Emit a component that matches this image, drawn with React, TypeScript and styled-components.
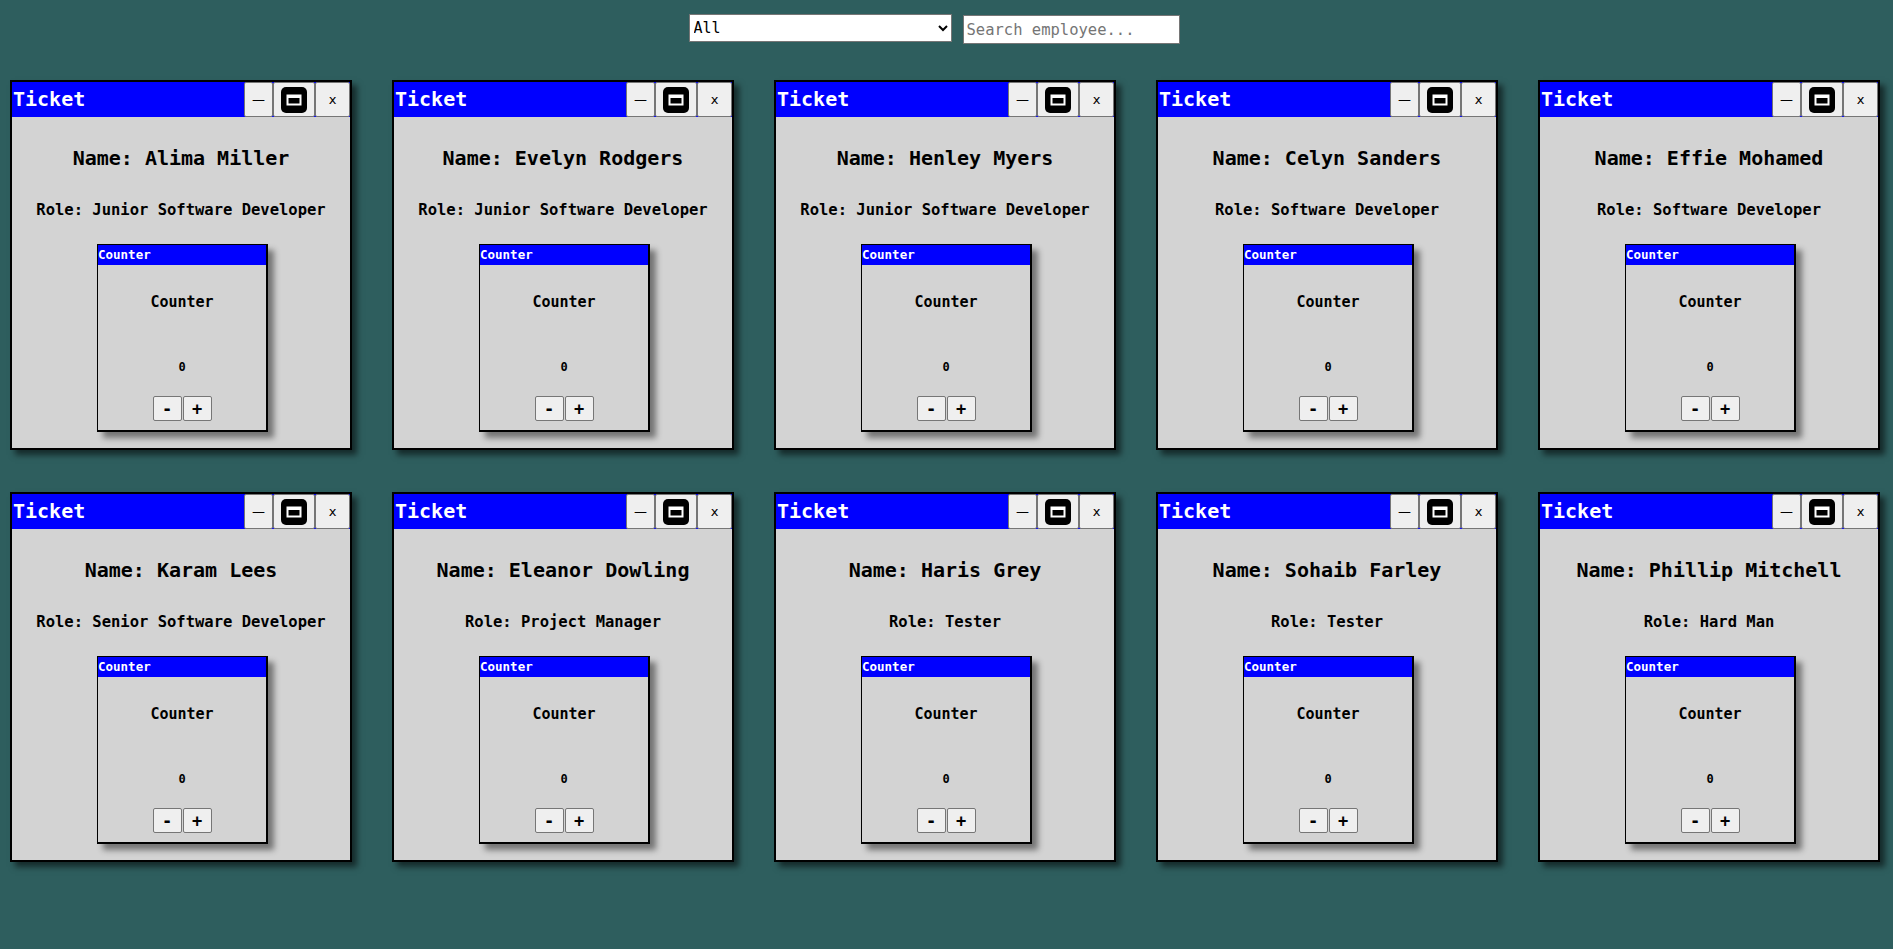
import { useState } from 'react';
import styled, { createGlobalStyle } from 'styled-components';

type Employee = { name: string; role: string };

const employees: Employee[] = [
  { name: 'Alima Miller', role: 'Junior Software Developer' },
  { name: 'Evelyn Rodgers', role: 'Junior Software Developer' },
  { name: 'Henley Myers', role: 'Junior Software Developer' },
  { name: 'Celyn Sanders', role: 'Software Developer' },
  { name: 'Effie Mohamed', role: 'Software Developer' },
  { name: 'Karam Lees', role: 'Senior Software Developer' },
  { name: 'Eleanor Dowling', role: 'Project Manager' },
  { name: 'Haris Grey', role: 'Tester' },
  { name: 'Sohaib Farley', role: 'Tester' },
  { name: 'Phillip Mitchell', role: 'Hard Man' },
];

const roles = Array.from(new Set(employees.map((e) => e.role)));

const mono = `"DejaVu Sans Mono", "Liberation Mono", monospace`;

const GlobalStyle = createGlobalStyle`
  html, body {
    margin: 0;
    background: #2e5e5e;
    font-family: ${mono};
  }
`;

const Page = styled.div`
  padding: 14px 13px 40px 10px;
`;

const Toolbar = styled.div`
  display: flex;
  justify-content: center;
  align-items: flex-start;
  gap: 11px;
  padding-right: 22px;
  margin-bottom: 36px;
`;

const RoleSelect = styled.select`
  width: 263px;
  height: 28px;
  font-family: ${mono};
  font-size: 15px;
  border: 1px solid #767676;
  background: #fff;
  color: #000;
`;

const SearchInput = styled.input`
  width: 217px;
  height: 29px;
  margin-top: 1px;
  box-sizing: border-box;
  padding: 1px 3px;
  font-family: ${mono};
  font-size: 15.5px;
  border: 1px solid #767676;
  background: #fff;

  &::placeholder {
    color: #757575;
  }
`;

const Grid = styled.div`
  display: grid;
  grid-template-columns: repeat(5, 342px);
  column-gap: 40px;
  row-gap: 42px;
`;

const Window = styled.div`
  box-sizing: border-box;
  height: 370px;
  border: 2px solid #000;
  background: #d3d3d3;
  box-shadow: 5px 5px 6px rgba(0, 0, 0, 0.55);
  display: flex;
  flex-direction: column;
`;

const TitleBar = styled.div`
  display: flex;
  align-items: stretch;
  height: 35px;
  background: #0000ff;
`;

const TitleText = styled.div`
  flex: 1;
  color: #fff;
  font-family: ${mono};
  font-weight: bold;
  font-size: 20px;
  line-height: 35px;
  padding-left: 1px;
`;

const TitleButton = styled.button<{ $w: number }>`
  width: ${(p) => p.$w}px;
  height: 35px;
  padding: 0;
  margin: 0;
  display: flex;
  align-items: center;
  justify-content: center;
  background: #efefef;
  border: 1px solid #767676;
  border-radius: 2px;
  color: #000;
  font-family: "DejaVu Sans", sans-serif;
  font-size: 13px;
  cursor: pointer;
`;

const Body = styled.div`
  flex: 1;
  display: flex;
  flex-direction: column;
  align-items: center;
  padding-top: 28px;
`;

const Name = styled.div`
  font-family: ${mono};
  font-weight: bold;
  font-size: 20px;
  line-height: 26px;
  color: #000;
`;

const Role = styled.div`
  margin-top: 29px;
  font-family: ${mono};
  font-weight: bold;
  font-size: 15.5px;
  line-height: 20px;
  color: #000;
`;

const CounterWindow = styled.div`
  margin: 24px 0 0 3px;
  box-sizing: border-box;
  width: 171px;
  height: 188px;
  border: 1px solid #000;
  border-right-width: 2px;
  border-bottom-width: 2px;
  background: #d3d3d3;
  box-shadow: 6px 6px 6px rgba(0, 0, 0, 0.45);
  display: flex;
  flex-direction: column;
  align-items: center;
`;

const CounterTitle = styled.div`
  align-self: stretch;
  height: 20px;
  background: #0000ff;
  color: #fff;
  font-family: ${mono};
  font-weight: bold;
  font-size: 12.5px;
  line-height: 20px;
`;

const CounterLabel = styled.div`
  margin-top: 28px;
  font-family: ${mono};
  font-weight: bold;
  font-size: 15px;
  line-height: 18px;
`;

const CounterValue = styled.div`
  margin-top: 49px;
  font-family: ${mono};
  font-weight: bold;
  font-size: 12px;
  line-height: 14px;
`;

const ButtonRow = styled.div`
  margin-top: 22px;
  display: flex;
  gap: 1px;
`;

const StepButton = styled.button`
  width: 29px;
  height: 25px;
  padding: 0;
  background: #efefef;
  border: 1px solid #767676;
  border-radius: 2px;
  font-family: ${mono};
  font-weight: bold;
  font-size: 17px;
  line-height: 20px;
  color: #000;
  cursor: pointer;
`;

const MaxIcon = () => (
  <svg width="26" height="26" viewBox="0 0 26 26">
    <rect x="0" y="0" width="26" height="26" rx="5" fill="#000" />
    <rect x="6.5" y="8.5" width="13" height="9" fill="#000" stroke="#fff" strokeWidth="2" />
    <rect x="6" y="8" width="14" height="3" fill="#fff" />
  </svg>
);

function Counter() {
  const [count, setCount] = useState(0);
  return (
    <CounterWindow>
      <CounterTitle>Counter</CounterTitle>
      <CounterLabel>Counter</CounterLabel>
      <CounterValue>{count}</CounterValue>
      <ButtonRow>
        <StepButton onClick={() => setCount((c) => c - 1)}>-</StepButton>
        <StepButton onClick={() => setCount((c) => c + 1)}>+</StepButton>
      </ButtonRow>
    </CounterWindow>
  );
}

function Ticket({ employee }: { employee: Employee }) {
  return (
    <Window>
      <TitleBar>
        <TitleText>Ticket</TitleText>
        <TitleButton $w={29}>—</TitleButton>
        <TitleButton $w={42}>
          <MaxIcon />
        </TitleButton>
        <TitleButton $w={35}>x</TitleButton>
      </TitleBar>
      <Body>
        <Name>Name: {employee.name}</Name>
        <Role>Role: {employee.role}</Role>
        <Counter />
      </Body>
    </Window>
  );
}

export default function App() {
  const [role, setRole] = useState('All');
  const [search, setSearch] = useState('');

  const list = employees.filter(
    (e) =>
      (role === 'All' || e.role === role) &&
      e.name.toLowerCase().includes(search.toLowerCase()),
  );

  return (
    <Page>
      <GlobalStyle />
      <Toolbar>
        <RoleSelect value={role} onChange={(e) => setRole(e.target.value)}>
          <option value="All">All</option>
          {roles.map((r) => (
            <option key={r} value={r}>
              {r}
            </option>
          ))}
        </RoleSelect>
        <SearchInput
          placeholder="Search employee..."
          value={search}
          onChange={(e) => setSearch(e.target.value)}
        />
      </Toolbar>
      <Grid>
        {list.map((e) => (
          <Ticket key={e.name} employee={e} />
        ))}
      </Grid>
    </Page>
  );
}
